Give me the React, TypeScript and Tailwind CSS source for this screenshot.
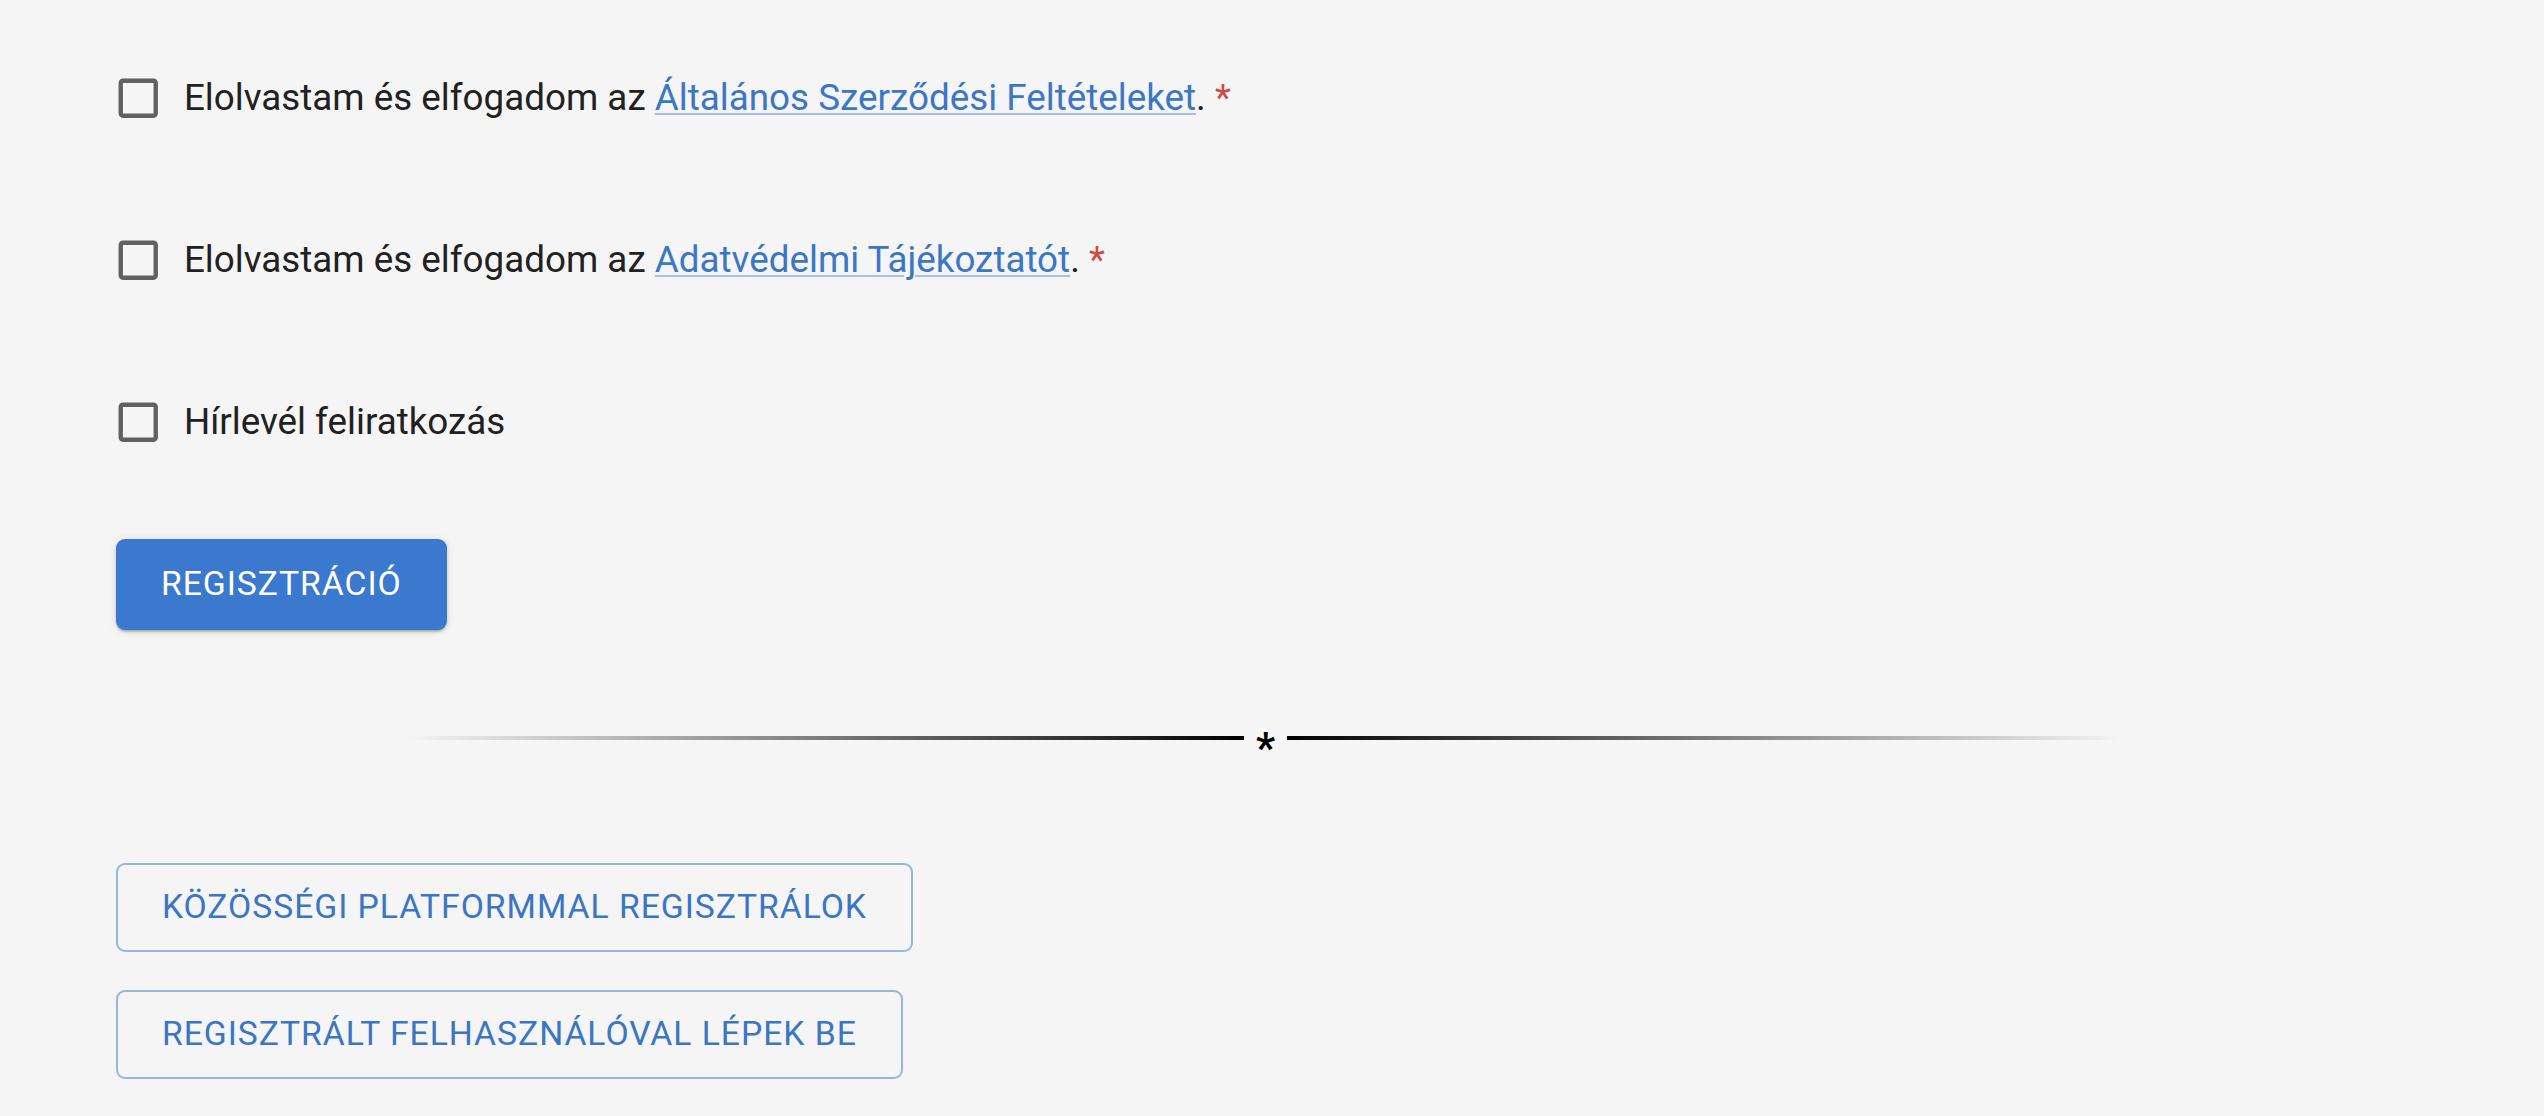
import React from 'react';

const CheckboxBlank = () => (
  <span className="flex p-[19.7px]">
    <svg viewBox="0 0 24 24" className="w-[52.5px] h-[52.5px] fill-[#616161]">
      <path d="M19 5v14H5V5h14m0-2H5c-1.11 0-2 .9-2 2v14c0 1.1.89 2 2 2h14c1.1 0 2-.9 2-2V5c0-1.1-.9-2-2-2z" />
    </svg>
  </span>
);

const linkCls =
  'text-[#3b77c5] underline decoration-[#a7bfe2] decoration-[1.5px] underline-offset-[3px]';

export default function App() {
  return (
    <div className="min-h-screen bg-[#f5f5f5] font-['Roboto','Liberation_Sans',sans-serif] text-[#212121]">
      <div className="pl-[116px] pt-[52px] pb-[37px] flex flex-col items-start">
        {/* Feltételek */}
        <label className="-ml-[24px] flex items-center h-[92px] text-[36.8px] leading-normal">
          <CheckboxBlank />
          <span>
            Elolvastam és elfogadom az <a className={linkCls}>Általános Szerződési Feltételeket</a>.
            <span className="text-[#cf4a43]"> *</span>
          </span>
        </label>

        <label className="-ml-[24px] mt-[70px] flex items-center h-[92px] text-[36.8px] leading-normal">
          <CheckboxBlank />
          <span>
            Elolvastam és elfogadom az <a className={linkCls}>Adatvédelmi Tájékoztatót</a>.
            <span className="text-[#cf4a43]"> *</span>
          </span>
        </label>

        <label className="-ml-[24px] mt-[70px] flex items-center h-[92px] text-[36.8px] leading-normal">
          <CheckboxBlank />
          <span>Hírlevél feliratkozás</span>
        </label>

        {/* Regisztráció gomb */}
        <button className="mt-[71px] h-[91px] px-[45px] rounded-[9px] bg-[#3a79cd] text-white text-[33.7px] font-normal tracking-[0.02857em] uppercase shadow-[0_3px_2px_-2px_rgba(0,0,0,0.2),0_2px_3px_0_rgba(0,0,0,0.14),0_1px_8px_0_rgba(0,0,0,0.12)]">
          Regisztráció
        </button>

        {/* Elválasztó */}
        <div className="mt-[88px] ml-[290px] w-[1719px] h-[40px] flex items-center">
          <div className="flex-1 h-[4px] bg-gradient-to-r from-transparent to-black" />
          <span className="mx-[12px] text-[42px] leading-none font-bold text-black translate-y-[10px]">*</span>
          <div className="flex-1 h-[4px] bg-gradient-to-r from-black to-transparent" />
        </div>

        {/* Alternatív belépés */}
        <button className="mt-[105px] h-[89px] px-[44px] rounded-[9px] border-2 border-[#97b5df] text-[#3a76c4] text-[33.7px] font-normal tracking-[0.02857em] uppercase">
          Közösségi platformmal regisztrálok
        </button>
        <button className="mt-[38px] h-[89px] px-[44px] rounded-[9px] border-2 border-[#97b5df] text-[#3a76c4] text-[33.7px] font-normal tracking-[0.02857em] uppercase">
          Regisztrált felhasználóval lépek be
        </button>
      </div>
    </div>
  );
}
